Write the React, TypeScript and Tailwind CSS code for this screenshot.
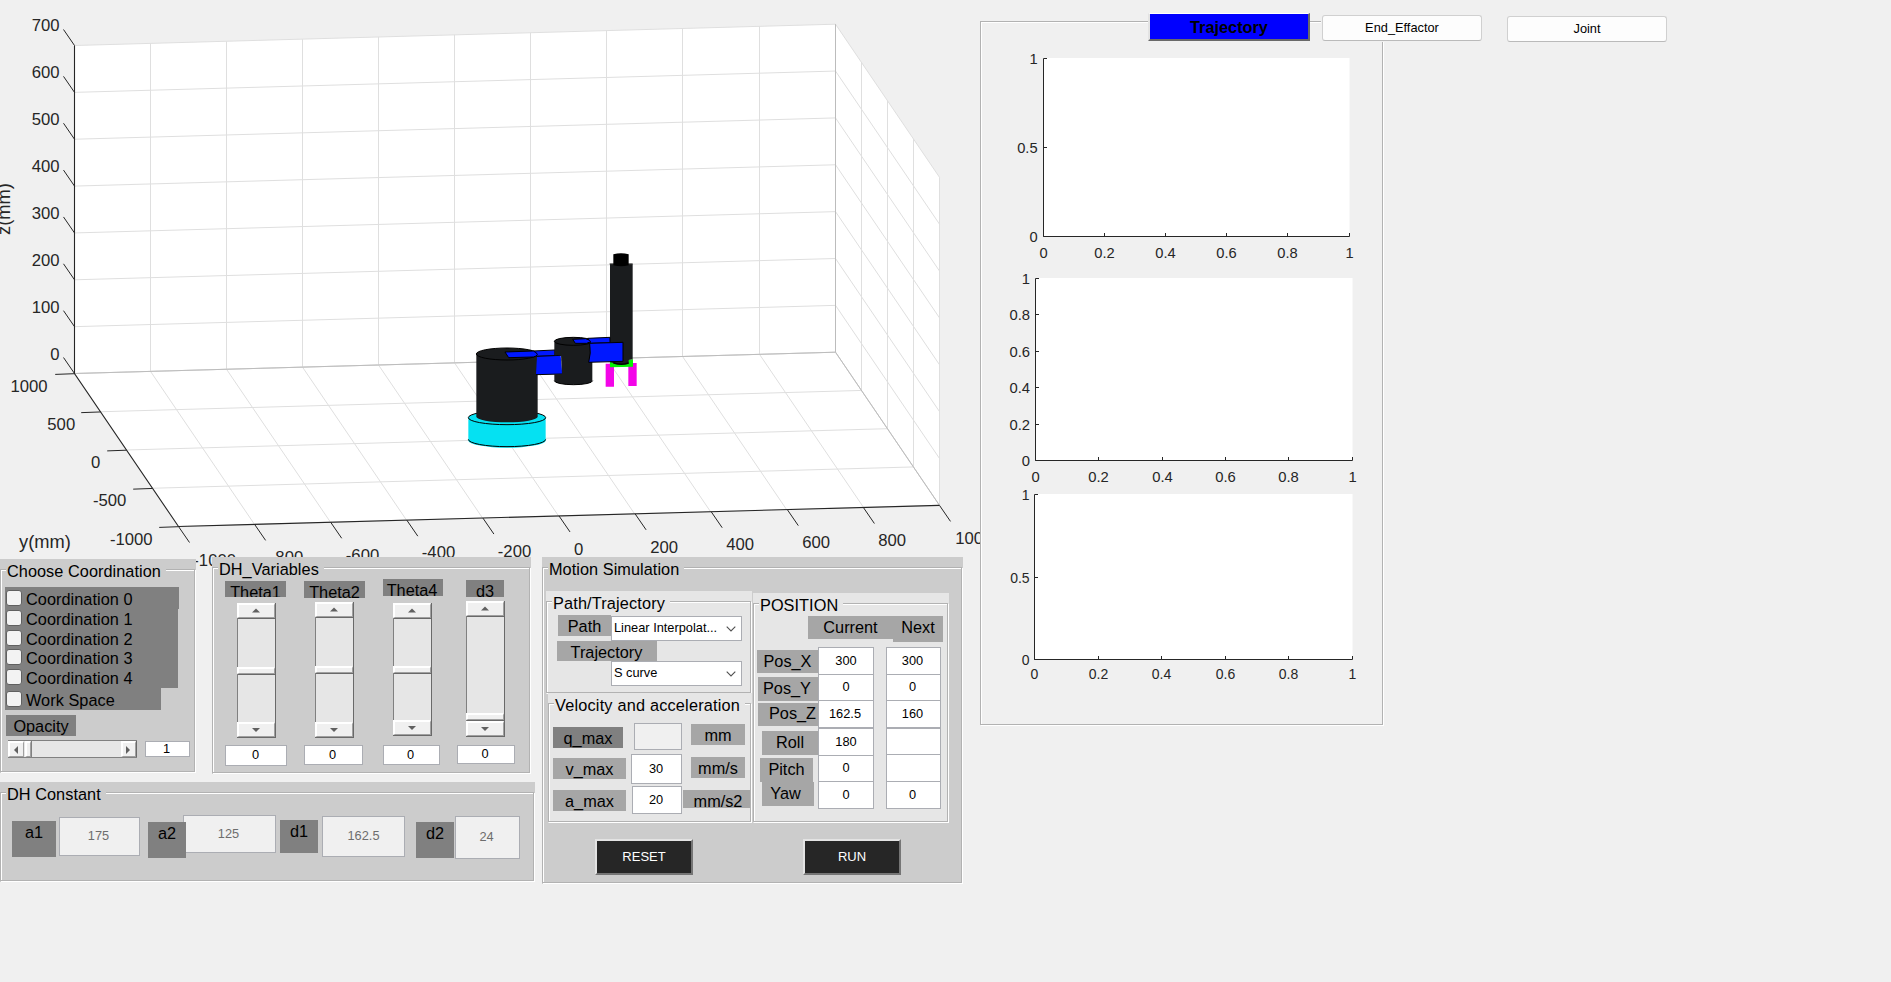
import React from "react";

type Kids = { children?: React.ReactNode };

function Panel({ title, className, children, pad = "" }: Kids & { title: string; className: string; pad?: string }) {
  return (
    <section className={`shrink-0 pt-[10px] pr-px pb-px ${className}`}>
      <div className="flex h-full flex-col items-start border border-[#b2b2b2] shadow-[1px_1px_0_#fff,inset_1px_1px_0_#fff]">
        <h2 className={`-mt-[8px] ml-[5px] shrink-0 bg-inherit pr-[5px] text-[16.3px] leading-[19px] tracking-[0.05px] whitespace-nowrap ${pad}`}>{title}</h2>
        {children}
      </div>
    </section>
  );
}

function Tag({ className, children }: Kids & { className: string }) {
  return <div className={`shrink-0 overflow-hidden text-center text-[16.3px] whitespace-nowrap ${className}`}>{children}</div>;
}

function Edit({ className, value, off }: { className: string; value: string; off?: boolean }) {
  return (
    <div
      className={`flex shrink-0 items-center justify-center border border-[#abadb3] text-[12.8px] leading-none ${
        off ? "bg-[#f0f0f0] text-[#6d6d6d]" : "bg-white text-black"
      } ${className}`}
    >
      {value}
    </div>
  );
}

const raised = "border-t-2 border-l-2 border-r border-b border-t-white border-l-white border-r-[#a0a0a0] border-b-[#a0a0a0] bg-[#f0f0f0]";

function ArrowButton({ dir, className }: { dir: "up" | "down" | "left" | "right"; className: string }) {
  const d = { up: "M0 5.5 L4 1.5 L8 5.5Z", down: "M0 2 L8 2 L4 6Z", left: "M6 0 L2 4 L6 8Z", right: "M2 0 L6 4 L2 8Z" }[dir];
  return (
    <div className={`flex shrink-0 items-center justify-center pr-[2px] ${raised} ${className}`}>
      <svg className="shrink-0" width="8" height="8" viewBox="0 0 8 8">
        <path d={d} fill="#606060" />
      </svg>
    </div>
  );
}

function VSlider({ className, upper }: { className: string; upper: string }) {
  return (
    <div className={`flex shrink-0 flex-col border-r border-l border-r-[#696969] border-l-[#808080] bg-[#e6e6e6] ${className}`}>
      <ArrowButton dir="up" className="-ml-px h-[15px]" />
      <div className={`shrink-0 border-t border-t-[#696969] ${upper}`} />
      <div className={`-ml-px h-[7px] shrink-0 ${raised}`} />
      <div className="flex-1 border-t border-t-[#696969]" />
      <ArrowButton dir="down" className="-ml-px h-[15px]" />
      <div className="-ml-px h-px shrink-0 bg-[#696969]" />
    </div>
  );
}

function Check({ label, className }: { label: string; className: string }) {
  return (
    <label className={`flex items-start bg-[#808080] pl-px ${className}`}>
      <span className="h-[16px] w-[16px] shrink-0 rounded-[3px] border border-[#606060] bg-[#f3f3f3]" />
      <span className="ml-[4px] text-[16.3px] leading-[19px] tracking-[0.05px]">{label}</span>
    </label>
  );
}

function Select({ value, className }: { value: string; className: string }) {
  return (
    <div className={`flex h-[25px] w-[131px] shrink-0 items-center justify-between border border-[#abadb3] bg-white pr-[5px] pl-[2px] text-[12.8px] leading-none whitespace-nowrap ${className}`}>
      {value}
      <svg width="10" height="6" viewBox="0 0 10 6">
        <path d="M0.7 0.7 L5 5 L9.3 0.7" fill="none" stroke="#505050" strokeWidth="1.1" />
      </svg>
    </div>
  );
}

const seq = (n: number) => Array.from({ length: n }, (_, i) => i);

function Workspace() {
  const dx = 76.1;
  const dy = -2.13;
  const zs = 46.86;
  const g = "#dfdfdf";
  const xl: [string, number, number][] = [
    ["-1000", 193.3, 565.6], ["-800", 269.8, 563], ["-600", 345.8, 560.6], ["-400", 421.8, 558.2], ["-200", 497.8, 556.6],
    ["0", 574, 554.6], ["200", 650.2, 553], ["400", 726.2, 550.4], ["600", 802.2, 548.2], ["800", 878.2, 546], ["1000", 955.3, 544],
  ];
  const yl: [string, number, number][] = [
    ["1000", 47.6, 391.6], ["500", 75.2, 429.6], ["0", 100.4, 467.6], ["-500", 126.4, 505.6], ["-1000", 152.6, 544.6],
  ];
  return (
    <svg className="h-[570px] w-[980px] shrink-0 font-['Liberation_Sans',sans-serif]" viewBox="0 0 980 570" fontSize="16.7" fill="#262626">
      <path d="M74.5 45.5 L835.5 24.2 L939.5 177.3 L939.5 505.4 L178.5 526.5 L74.5 373.5Z" fill="#fff" />
      <g stroke={g} fill="none">
        {seq(10).map((i) => (
          <path key={i} d={`M${Math.floor(74.5 + (i + 1) * 76) + (i > 7 ? 1 : 0) + 0.5} ${45.5 + dy * (i + 1)} V${373.5 + dy * (i + 1)} l104 153`} />
        ))}
        {seq(8).map((i) => (
          <path key={i} d={`M74.5 ${45.5 + zs * i} L835.5 ${24.2 + zs * i} L939.5 ${177.3 + zs * i}`} />
        ))}
        {seq(5).map((i) => (
          <path key={i} d={`M${74.5 + 26 * i} ${373.5 + 38.25 * i} l761 -21.3 V${24.2 + 38.25 * i}`} />
        ))}
      </g>
      <path d="M74.5 373.5 L835.5 352.2 M835.5 24.2 V352.2 L939.5 505.4" stroke="#bcbcbc" fill="none" />
      <g stroke="#262626" fill="none">
        <path d="M74.5 45.5 V373.5 L178.5 526.5 L939.5 505.4" strokeWidth="1.1" />
        {seq(8).map((i) => (
          <path key={i} d={`M74.5 ${45.5 + zs * i} l-11 -16`} />
        ))}
        {seq(5).map((i) => (
          <path key={i} d={`M${74.5 + 26 * i} ${373.7 + 38.25 * i} l-19.3 0.7`} />
        ))}
        {seq(11).map((i) => (
          <path key={i} d={`M${178.5 + dx * i} ${526.5 - 2.11 * i} l11 16`} />
        ))}
      </g>
      {seq(8).map((i) => (
        <text key={i} x="59.6" y={31.2 + 46.9 * i} textAnchor="end">{700 - i * 100}</text>
      ))}
      {yl.map(([t, x, y]) => (
        <text key={t} x={x} y={y} textAnchor="end">{t}</text>
      ))}
      {xl.map(([t, x, y]) => (
        <text key={t} x={x} y={y}>{t}</text>
      ))}
      <text x="19" y="548.3" fontSize="18.3">y(mm)</text>
      <text transform="translate(10 235) rotate(-90)" fontSize="18.3">z(mm)</text>

      <g transform="translate(440 230) scale(0.33333)" strokeWidth="3">
        <path d="M85 563 A116 21 0 0 1 317 563 V632 A116 21 0 0 1 85 632Z" fill="#05e1f2" />
        <g fill="none" stroke="#000">
          <ellipse cx="201" cy="563" rx="116" ry="21" />
          <path d="M85 628 A116 22 0 0 0 317 628" />
        </g>
        <path d="M109 372 A92 18 0 0 1 293 372 V560 A92 17 0 0 1 109 560Z" fill="#1a1c1e" />
        <ellipse cx="201" cy="372" rx="92" ry="18" fill="none" stroke="#000" />
        <g fill="#0018ff" stroke="#000">
          <path d="M280 363 L345 360 V378 L290 379Z" />
          <path d="M195 366 L280 363 Q292 368 292 374 Q290 379 280 381 L206 383Z" />
          <path d="M291 379 L362 376 L367 432 L288 434Z" stroke="none" />
          <path d="M291 379 L364 376 M288 434 L368 432" />
        </g>
        <path d="M343 334 A57 12 0 0 1 457 334 V452 A57 12 0 0 1 343 452 V432 H366 L363 376 H343Z" fill="#1a1c1e" />
        <g fill="none" stroke="#000">
          <ellipse cx="400" cy="334" rx="57" ry="12" />
          <path d="M343 452 A57 12 0 0 0 458 452" />
        </g>
        <path d="M497 401 h25 v69 h-25Z M565 399 h25 v69 h-25Z" fill="#f305e8" />
        <path d="M510 396 L565 390 L579 388 V410 L510 412Z" fill="#05f205" />
        <path d="M510 103 H578 V388 L566 390 V399 Q545 406 522 400 L510 396Z" fill="#1a1c1e" />
        <path d="M520 398 Q543 407 566 399" fill="none" stroke="#000" strokeWidth="5" />
        <path d="M509 102 H578" stroke="#000" />
        <path d="M520 73 Q543 67 566 73 V106 Q543 112 520 106Z" fill="#000" />
        <g fill="#0018ff" stroke="#000">
          <path d="M443 325 L510 322 V338 L452 340Z" />
          <path d="M398 328 L437 326 Q452 331 452 335 L440 340 L406 340Z" />
          <path d="M449 340 L549 337 V394 L446 397 Q454 370 449 340Z" />
        </g>
      </g>
    </svg>
  );
}

type ChartProps = {
  top: number; height: number; x0: number; x1: number; y0: number; y1: number; ys: string[]; base: number; right: number; drop: number; size: number;
};

function Chart({ top, height, x0, x1, y0, y1, ys, base, right, drop, size }: ChartProps) {
  const xs = ["0", "0.2", "0.4", "0.6", "0.8", "1"];
  const px = (i: number) => Math.floor(x0 + ((x1 - x0) * i) / 5) + 0.5;
  const py = (i: number) => Math.floor(y1 - ((y1 - y0) * i) / (ys.length - 1)) + 0.5;
  return (
    <svg className="shrink-0 font-['Liberation_Sans',sans-serif]" width="401" height={height} viewBox={`981 ${top} 401 ${height}`} fontSize={size} fill="#262626">
      <rect x={x0} y={y0 - 0.5} width={x1 - x0 + 0.5} height={y1 - y0} fill="#fff" />
      <path d={`M${x0} ${y0} V${y1} H${x1 + 0.5}`} fill="none" stroke="#262626" />
      {xs.map((t, i) => (
        <g key={t}>
          <path d={`M${px(i)} ${y1} v-3.5`} stroke="#262626" />
          <text x={px(i)} y={base} textAnchor="middle">{t}</text>
        </g>
      ))}
      {ys.map((t, i) => (
        <g key={t}>
          <path d={`M${x0} ${py(i)} h3.5`} stroke="#262626" />
          <text x={right} y={py(i) + drop} textAnchor="end">{t}</text>
        </g>
      ))}
    </svg>
  );
}

const push =
  "flex h-[36px] w-[98px] shrink-0 items-center justify-center border-t-2 border-l-2 border-r-2 border-b-2 border-t-[#e3e3e3] border-l-[#e3e3e3] border-r-[#757575] border-b-[#757575] bg-[#262626] text-[13px] text-white";

const flat = "flex h-[26px] w-[160px] items-center justify-center rounded-[3px] border border-[#d0d0d0] border-b-[#bababa] bg-[#fdfdfd] text-[12.8px]";

export default function App() {
  return (
    <main className="flex h-[982px] w-[1891px] overflow-hidden bg-[#f0f0f0] font-['Liberation_Sans',Arial,sans-serif] text-black">
      <div className="flex w-[980px] shrink-0 flex-col">
        <Workspace />
        <div className="-mt-[13px] flex items-start">
          <div className="w-[542px] shrink-0">
            <div className="flex h-[217px] items-start gap-[16px]">
              <Panel title="Choose Coordination" className="mt-[2px] h-[214px] w-[196px] bg-[#cccccc] [&_h2]:bg-[#cccccc]" pad="pl-px">
                <div className="mt-[6px] ml-[4px] flex flex-col">
                  <Check label="Coordination 0" className="h-[22px] w-[174px] pt-[3px]" />
                  <Check label="Coordination 1" className="h-[19px] w-[173px] pt-px" />
                  <Check label="Coordination 2" className="h-[19px] w-[173px] pt-[2px]" />
                  <Check label="Coordination 3" className="h-[19px] w-[173px] pt-[2px]" />
                  <Check label="Coordination 4" className="h-[22px] w-[173px] pt-[3px]" />
                  <Check label="Work Space" className="h-[22px] w-[156px] pt-[3px]" />
                </div>
                <Tag className="mt-[5px] ml-[5px] h-[21px] w-[70px] bg-[#808080] leading-[22px]">Opacity</Tag>
                <div className="mt-[4px] ml-[7px] flex">
                  <div className="flex h-[18px] w-[129px] border-t border-b border-t-[#808080] border-b-[#808080] bg-[#e6e6e6]">
                    <ArrowButton dir="left" className="w-[16px]" />
                    <div className={`ml-px w-[6px] ${raised}`} />
                    <div className="flex-1 border-l border-[#808080]" />
                    <ArrowButton dir="right" className="w-[15px]" />
                    <div className="w-px bg-[#696969]" />
                  </div>
                  <Edit value="1" className="mt-px ml-[8px] h-[16px] w-[45px] pr-[2px]" />
                </div>
              </Panel>

              <Panel title="DH_Variables" className="h-[217px] w-[319px] bg-[#cccccc] [&_h2]:bg-[#cccccc]" pad="pl-px">
                <div className="flex items-start">
                  <div className="ml-[12px] w-[62px]">
                    <Tag className="mt-[2px] h-[16px] w-[61px] bg-[#808080] leading-[22px]">Theta1</Tag>
                    <VSlider className="mt-[6px] ml-[12px] h-[135px] w-[39px]" upper="h-[49px]" />
                    <Edit value="0" className="mt-[7px] h-[21px] w-[62px] pr-px" />
                  </div>
                  <div className="ml-[17px] w-[61px]">
                    <Tag className="mt-[2px] h-[17px] w-[61px] bg-[#808080] leading-[22px]">Theta2</Tag>
                    <VSlider className="mt-[4px] ml-[11px] h-[136px] w-[39px]" upper="h-[49px]" />
                    <Edit value="0" className="mt-[7px] h-[20px] w-[59px] pr-[2px]" />
                  </div>
                  <div className="ml-[18px] w-[60px]">
                    <Tag className="h-[17px] w-[60px] bg-[#808080] pr-[2px] leading-[22px]">Theta4</Tag>
                    <VSlider className="mt-[7px] ml-[10px] h-[133px] w-[39px]" upper="h-[48px]" />
                    <Edit value="0" className="mt-[9px] h-[20px] w-[57px] pr-[2px]" />
                  </div>
                  <div className="ml-[14px] w-[58px]">
                    <Tag className="mt-px ml-[9px] h-[17px] w-[38px] bg-[#808080] leading-[22px]">d3</Tag>
                    <VSlider className="mt-[4px] ml-[9px] h-[136px] w-[39px]" upper="h-[97px]" />
                    <Edit value="0" className="mt-[8px] h-[19px] w-[58px] pr-[2px]" />
                  </div>
                </div>
              </Panel>
            </div>

            <Panel title="DH Constant" className="mt-[8px] h-[100px] w-[535px] bg-[#cccccc] [&_h2]:bg-[#cccccc]" pad="pl-px">
              <div className="flex items-start">
                <Tag className="mt-[17px] ml-[11px] h-[36px] w-[44px] bg-[#808080] leading-[23px]">a1</Tag>
                <Edit off value="175" className="mt-[13px] ml-[3px] h-[39px] w-[81px] pr-[2px]" />
                <Tag className="z-10 mt-[18px] ml-[8px] h-[36px] w-[38px] bg-[#808080] leading-[23px]">a2</Tag>
                <Edit off value="125" className="mt-[11px] -ml-[3px] h-[38px] w-[93px] pr-[2px]" />
                <Tag className="mt-[16px] ml-[4px] h-[33px] w-[38px] bg-[#808080] leading-[23px]">d1</Tag>
                <Edit off value="162.5" className="mt-[12px] ml-[4px] h-[41px] w-[83px]" />
                <Tag className="mt-[18px] ml-[11px] h-[36px] w-[38px] bg-[#808080] leading-[23px]">d2</Tag>
                <Edit off value="24" className="mt-[12px] ml-px h-[43px] w-[65px] pr-[2px]" />
              </div>
            </Panel>
          </div>

          <Panel title="Motion Simulation" className="h-[327px] w-[421px] bg-[#cccccc] [&_h2]:bg-[#cccccc]" pad="pl-px">
            <div className="mt-[12px] flex items-start">
              <div className="ml-[3px] w-[206px] shrink-0">
                <Panel title="Path/Trajectory" className="h-[103px] w-[206px] bg-[#e6e6e6] [&_h2]:bg-[#e6e6e6] [&_h2]:tracking-[0.15px]" pad="pl-px">
                  <div className="mt-[2px] ml-[11px] flex items-start">
                    <Tag className="h-[21px] w-[53px] bg-[#a6a6a6] leading-[22px]">Path</Tag>
                    <Select value="Linear Interpolat..." className="mt-px" />
                  </div>
                  <Tag className="ml-[10px] h-[20px] w-[100px] bg-[#a6a6a6] pr-px leading-[22px]">Trajectory</Tag>
                  <Select value="S curve" className="ml-[64px]" />
                </Panel>
                <Panel title="Velocity and acceleration" className="-mt-px ml-[2px] h-[130px] w-[204px] bg-[#e6e6e6] [&_h2]:bg-[#e6e6e6] [&_h2]:tracking-[0.2px]" pad="pl-px">
                  <div className="mt-[8px] ml-[4px] flex h-[31px] items-start">
                    <Tag className="mt-[4px] h-[21px] w-[70px] bg-[#808080] leading-[22px]">q_max</Tag>
                    <Edit off value="" className="ml-[11px] h-[27px] w-[48px]" />
                    <Tag className="mt-px ml-[9px] h-[21px] w-[54px] bg-[#a6a6a6] leading-[22px]">mm</Tag>
                  </div>
                  <div className="ml-[4px] flex h-[32px] items-start">
                    <Tag className="mt-[4px] h-[21px] w-[73px] bg-[#a6a6a6] leading-[22px]">v_max</Tag>
                    <Edit value="30" className="ml-[5px] h-[30px] w-[51px] pr-px" />
                    <Tag className="mt-[3px] ml-[9px] h-[21px] w-[54px] bg-[#a6a6a6] leading-[22px]">mm/s</Tag>
                  </div>
                  <div className="ml-[4px] flex items-start">
                    <Tag className="mt-[4px] h-[21px] w-[73px] bg-[#a6a6a6] leading-[22px]">a_max</Tag>
                    <Edit value="20" className="ml-[6px] h-[28px] w-[50px] pr-[2px]" />
                    <Tag className="mt-[4px] ml-px h-[18px] w-[67px] bg-[#a6a6a6] pl-[3px] leading-[22px]">mm/s2</Tag>
                  </div>
                </Panel>
              </div>

              <Panel title="POSITION" className="mt-[2px] ml-px h-[230px] w-[196px] bg-[#e6e6e6] [&_h2]:bg-[#e6e6e6]" pad="pl-px">
                <div className="mt-px ml-[54px] flex h-[30px] items-start">
                  <Tag className="h-[23px] w-[85px] bg-[#a6a6a6] leading-[22px]">Current</Tag>
                  <Tag className="h-[26px] w-[50px] bg-[#a6a6a6] leading-[22px]">Next</Tag>
                </div>
                <div className="flex items-start">
                  <div className="w-[64px] shrink-0 pt-[4px]">
                    <Tag className="ml-[3px] h-[23px] w-[61px] bg-[#a6a6a6] leading-[22px]">Pos_X</Tag>
                    <Tag className="mt-[4px] ml-[4px] h-[24px] w-[60px] bg-[#a6a6a6] pr-[2px] leading-[22px]">Pos_Y</Tag>
                    <Tag className="mt-[2px] ml-[4px] h-[23px] w-[60px] bg-[#a6a6a6] pl-[9px] leading-[21px]">Pos_Z</Tag>
                    <Tag className="mt-[5px] ml-[8px] h-[24px] w-[56px] bg-[#a6a6a6] leading-[22px]">Roll</Tag>
                    <Tag className="mt-[3px] ml-[6px] h-[24px] w-[53px] bg-[#a6a6a6] leading-[22px]">Pitch</Tag>
                    <Tag className="ml-[8px] h-[24px] w-[52px] bg-[#a6a6a6] pr-[5px] leading-[22px]">Yaw</Tag>
                  </div>
                  <div className="mt-px w-[56px] shrink-0">
                    <Edit value="300" className="h-[28px]" />
                    <Edit value="0" className="-mt-px h-[27px]" />
                    <Edit value="162.5" className="-mt-px h-[28px] pr-[2px]" />
                    <Edit value="180" className="h-[28px]" />
                    <Edit value="0" className="-mt-px h-[27px]" />
                    <Edit value="0" className="-mt-px h-[28px]" />
                  </div>
                  <div className="mt-px ml-[12px] w-[55px] shrink-0">
                    <Edit value="300" className="h-[28px] pr-[2px]" />
                    <Edit value="0" className="-mt-px h-[27px] pr-[2px]" />
                    <Edit value="160" className="-mt-px h-[28px] pr-[2px]" />
                    <Edit value="" className="h-[27px]" />
                    <Edit value="" className="-mt-px h-[28px]" />
                    <Edit value="0" className="-mt-px h-[28px] pr-[2px]" />
                  </div>
                </div>
              </Panel>
            </div>
            <div className="mt-[16px] ml-[52px] flex gap-[110px]">
              <button className={push}>RESET</button>
              <button className={push}>RUN</button>
            </div>
          </Panel>
        </div>
      </div>

      <div className="flex flex-1 flex-col">
        <div className="z-10 flex h-[42px] shrink-0 items-start">
          <button className="mt-[13px] ml-[168px] flex h-[28px] w-[162px] items-center justify-center border-t border-l-2 border-r-2 border-b-2 border-t-white border-l-[#e3e3e3] border-r-[#696969] border-b-[#696969] bg-[#0000ff] pt-px text-[16.3px] font-bold">
            Trajectory
          </button>
          <div className="mt-[14px] ml-[11px] h-[28px] bg-[#f0f0f0] p-px">
            <button className={flat}>End_Effactor</button>
          </div>
          <button className={`mt-[16px] ml-[24px] ${flat}`}>Joint</button>
        </div>
        <div className="-mt-[21px] flex h-[704px] w-[403px] shrink-0 flex-col border border-[#b2b2b2] shadow-[1px_1px_0_#fff,inset_1px_1px_0_#fff]">
          <Chart top={22} height={244} x0={1043.5} x1={1349} y0={58.5} y1={236.5} ys={["0", "0.5", "1"]} base={258} right={1037.6} drop={5.8} size={14.7} />
          <Chart top={266} height={221} x0={1035.5} x1={1352} y0={278.5} y1={460.5} ys={["0", "0.2", "0.4", "0.6", "0.8", "1"]} base={481.7} right={1030} drop={5.4} size={14.8} />
          <Chart top={487} height={236} x0={1034.5} x1={1352} y0={494.5} y1={659.5} ys={["0", "0.5", "1"]} base={678.7} right={1029.6} drop={5.4} size={14} />
        </div>
      </div>
    </main>
  );
}
